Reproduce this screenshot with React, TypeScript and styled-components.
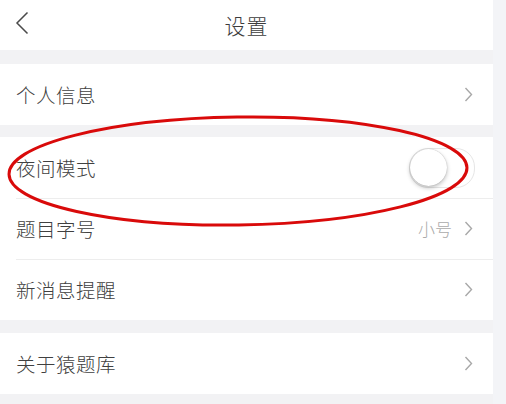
import React, { FC, useState } from "react";
import styled, { createGlobalStyle } from "styled-components";

const GlobalStyle = createGlobalStyle`
  html, body {
    margin: 0;
    padding: 0;
    background: #f3f4f7;
    font-family: "Noto Sans CJK SC", "Noto Sans", sans-serif;
  }
`;

interface RowItem {
  label: string;
  value?: string;
  toggle?: boolean;
}

const groups: RowItem[][] = [
  [{ label: "个人信息" }],
  [{ label: "夜间模式", toggle: true }, { label: "题目字号", value: "小号" }, { label: "新消息提醒" }],
  [{ label: "关于猿题库" }],
];

const Chevron: FC<{ left?: boolean }> = ({ left }) =>
  left ? (
    <svg width="14" height="24" viewBox="0 0 14 24">
      <path d="M12.5 1.5 L2 12 L12.5 22.5" fill="none" stroke="#4a4a4a" strokeWidth="1.5" />
    </svg>
  ) : (
    <svg width="9" height="15" viewBox="0 0 9 15">
      <path d="M1.5 1 L7.5 7.5 L1.5 14" fill="none" stroke="#a8a8a8" strokeWidth="1.4" />
    </svg>
  );

const App: FC = () => {
  const [night, setNight] = useState(false);

  return (
    <>
      <GlobalStyle />
      <Page>
        <Header>
          <BackButton>
            <Chevron left />
          </BackButton>
          <Title>设置</Title>
        </Header>
        {groups.map((group, gi) => (
          <Group key={gi}>
            {group.map((item, i) => (
              <Row key={item.label} divided={i > 0}>
                <Label>{item.label}</Label>
                {item.toggle ? (
                  <Toggle on={night} onClick={() => setNight(!night)}>
                    <Knob on={night} />
                  </Toggle>
                ) : (
                  <Right>
                    {item.value && <Value>{item.value}</Value>}
                    <Chevron />
                  </Right>
                )}
              </Row>
            ))}
          </Group>
        ))}
        <Mark viewBox="0 0 506 404">
          <ellipse
            cx="238"
            cy="171"
            rx="229"
            ry="54"
            transform="rotate(-0.8 238 171)"
            fill="none"
            stroke="#d90a0a"
            strokeWidth="3"
          />
        </Mark>
      </Page>
    </>
  );
};

export default App;

const Page = styled.div`
  position: relative;
  width: 493px;
  height: 404px;
  background: #f2f2f4;
  overflow: hidden;
`;

const Header = styled.div`
  height: 50px;
  background: #fff;
  display: flex;
  align-items: center;
  justify-content: center;
  position: relative;
`;

const BackButton = styled.div`
  position: absolute;
  left: 15px;
  top: 11px;
  display: flex;
`;

const Title = styled.div`
  font-size: 21px;
  font-weight: 300;
  color: #3c3c3c;
  letter-spacing: 1px;
`;

const Group = styled.div`
  background: #fff;
  margin-top: 14px;
  &:nth-of-type(3) {
    margin-top: 12px;
  }
  &:nth-of-type(4) {
    margin-top: 13px;
  }
`;

const Row = styled.div<{ divided?: boolean }>`
  height: 61px;
  display: flex;
  align-items: center;
  justify-content: space-between;
  padding: 0 20px 0 16px;
  position: relative;
  ${(p) =>
    p.divided &&
    `
    &::before {
      content: "";
      position: absolute;
      left: 16px;
      right: 0;
      top: 0;
      height: 1px;
      background: #ededed;
    }
  `}
`;

const Label = styled.span`
  font-size: 19.5px;
  font-weight: 300;
  color: #404040;
  letter-spacing: 0.5px;
`;

const Right = styled.div`
  display: flex;
  align-items: center;
  gap: 12px;
`;

const Value = styled.span`
  font-size: 17px;
  font-weight: 300;
  color: #aaa;
`;

const Toggle = styled.div<{ on: boolean }>`
  width: 64px;
  height: 38px;
  border-radius: 19px;
  border: 1px solid #e6e6e6;
  background: ${(p) => (p.on ? "#4cd964" : "#fff")};
  margin-right: -2px;
  position: relative;
  cursor: pointer;
`;

const Knob = styled.div<{ on: boolean }>`
  position: absolute;
  top: 0;
  left: ${(p) => (p.on ? "26px" : "0")};
  width: 37px;
  height: 37px;
  border-radius: 50%;
  background: #fff;
  box-shadow: 0 2px 4px rgba(0, 0, 0, 0.25), 0 0 1px rgba(0, 0, 0, 0.3);
`;

const Mark = styled.svg`
  position: absolute;
  left: 0;
  top: 0;
  width: 506px;
  height: 404px;
  pointer-events: none;
`;
